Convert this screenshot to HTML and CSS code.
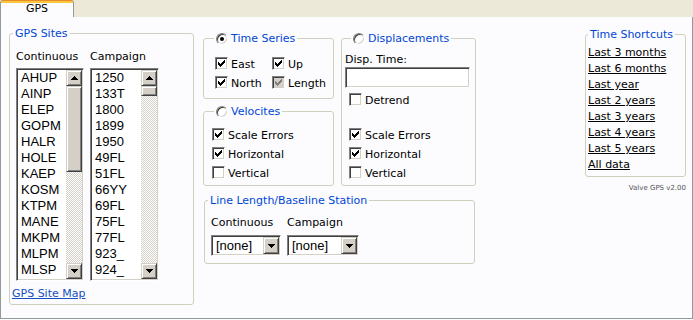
FILE: index.html
```html
<!DOCTYPE html>
<html>
<head>
<meta charset="utf-8">
<title>Valve GPS</title>
<link rel="stylesheet" href="styles.css">
</head>
<body>
<svg class="defs" width="0" height="0">
  <defs>
    <symbol id="ck" viewBox="0 0 13 13">
      <path d="M9 3h1v1h-1zM8 4h2v1h-2zM3 5h1v1h-1zM7 5h3v1h-3zM3 6h2v1h-2zM6 6h3v1h-3zM3 7h5v1h-5zM4 8h3v1h-3zM5 9h1v1h-1z"/>
    </symbol>
    <symbol id="up" viewBox="0 0 7 4">
      <path d="M3 0h1v1h-1zM2 1h3v1h-3zM1 2h5v1h-5zM0 3h7v1h-7z"/>
    </symbol>
    <symbol id="dn" viewBox="0 0 7 4">
      <path d="M0 0h7v1h-7zM1 1h5v1h-5zM2 2h3v1h-3zM3 3h1v1h-1z"/>
    </symbol>
  </defs>
</svg>

<div class="tabs"><div class="tab">GPS</div></div>

<div class="panel">
  <fieldset class="group sites">
    <legend>GPS Sites</legend>
    <div class="lists">
      <div class="listcol c1">
        <div class="lbl">Continuous</div>
        <div class="listbox">
          <ul class="items">
            <li>AHUP</li><li>AINP</li><li>ELEP</li><li>GOPM</li><li>HALR</li><li>HOLE</li><li>KAEP</li><li>KOSM</li><li>KTPM</li><li>MANE</li><li>MKPM</li><li>MLPM</li><li>MLSP</li>
          </ul>
          <div class="vscroll">
            <span class="sbtn"><svg class="arr"><use href="#up"/></svg></span>
            <span class="thumb big"></span>
            <span class="track"></span>
            <span class="sbtn"><svg class="arr"><use href="#dn"/></svg></span>
          </div>
        </div>
      </div>
      <div class="listcol c2">
        <div class="lbl">Campaign</div>
        <div class="listbox">
          <ul class="items">
            <li>1250</li><li>133T</li><li>1800</li><li>1899</li><li>1950</li><li>49FL</li><li>51FL</li><li>66YY</li><li>69FL</li><li>75FL</li><li>77FL</li><li>923_</li><li>924_</li>
          </ul>
          <div class="vscroll">
            <span class="sbtn"><svg class="arr"><use href="#up"/></svg></span>
            <span class="thumb small"></span>
            <span class="track"></span>
            <span class="sbtn"><svg class="arr"><use href="#dn"/></svg></span>
          </div>
        </div>
      </div>
    </div>
    <a class="maplink" href="#">GPS Site Map</a>
  </fieldset>

  <div class="middle">
    <div class="upper">
      <div class="leftstack">
        <fieldset class="group ts">
          <legend class="rleg"><span class="radio on"></span><span>Time Series</span></legend>
          <div class="tsgrid">
            <div class="cb"><span class="chk"><svg class="ckm"><use href="#ck"/></svg></span><span class="t">East</span></div>
            <div class="cb"><span class="chk"><svg class="ckm"><use href="#ck"/></svg></span><span class="t">Up</span></div>
            <div class="cb"><span class="chk"><svg class="ckm"><use href="#ck"/></svg></span><span class="t">North</span></div>
            <div class="cb"><span class="chk dis"><svg class="ckm"><use href="#ck"/></svg></span><span class="t">Length</span></div>
          </div>
        </fieldset>
        <fieldset class="group vel">
          <legend class="rleg"><span class="radio"></span><span>Velocites</span></legend>
          <div class="cblist vcb">
            <div class="cb"><span class="chk"><svg class="ckm"><use href="#ck"/></svg></span><span class="t">Scale Errors</span></div>
            <div class="cb"><span class="chk"><svg class="ckm"><use href="#ck"/></svg></span><span class="t">Horizontal</span></div>
            <div class="cb"><span class="chk"></span><span class="t">Vertical</span></div>
          </div>
        </fieldset>
      </div>
      <fieldset class="group disp">
        <legend class="dleg"><span class="radio"></span><span>Displacements</span></legend>
        <div class="lbl dlbl">Disp. Time:</div>
        <div class="textbox"></div>
        <div class="cblist dcb1">
          <div class="cb"><span class="chk"></span><span class="t">Detrend</span></div>
        </div>
        <div class="cblist dcb2">
          <div class="cb"><span class="chk"><svg class="ckm"><use href="#ck"/></svg></span><span class="t">Scale Errors</span></div>
          <div class="cb"><span class="chk"><svg class="ckm"><use href="#ck"/></svg></span><span class="t">Horizontal</span></div>
          <div class="cb"><span class="chk"></span><span class="t">Vertical</span></div>
        </div>
      </fieldset>
    </div>
    <fieldset class="group line">
      <legend>Line Length/Baseline Station</legend>
      <div class="selrow">
        <div class="selcol s1">
          <div class="lbl">Continuous</div>
          <div class="select"><span class="val">[none]</span><span class="sbtn dd"><svg class="arr"><use href="#dn"/></svg></span></div>
        </div>
        <div class="selcol s2">
          <div class="lbl">Campaign</div>
          <div class="select"><span class="val">[none]</span><span class="sbtn dd"><svg class="arr"><use href="#dn"/></svg></span></div>
        </div>
      </div>
    </fieldset>
  </div>

  <div class="right">
    <fieldset class="group shortcuts">
      <legend>Time Shortcuts</legend>
      <div class="links">
        <a href="#">Last 3 months</a>
        <a href="#">Last 6 months</a>
        <a href="#">Last year</a>
        <a href="#">Last 2 years</a>
        <a href="#">Last 3 years</a>
        <a href="#">Last 4 years</a>
        <a href="#">Last 5 years</a>
        <a href="#">All data</a>
      </div>
    </fieldset>
    <div class="version">Valve GPS v2.00</div>
  </div>
</div>
</body>
</html>
```

FILE: styles.css
```css
* { box-sizing: border-box; }
html, body { margin: 0; padding: 0; }
body {
  width: 693px;
  height: 320px;
  overflow: hidden;
  background: #fcfcfe;
  font-family: "DejaVu Sans", sans-serif;
  font-size: 11px;
  color: #000;
}
.defs { position: absolute; width: 0; height: 0; overflow: hidden; }

/* tab strip */
.tabs { height: 17px; background: #ece9d8; display: flex; }
.tab {
  width: 74px;
  height: 17px;
  padding-top: 3px;
  border-left: 1px solid #919b9c;
  border-right: 1px solid #919b9c;
  border-radius: 3px 3px 0 0;
  background: linear-gradient(#e68b2c 0 1px, #ffc73c 1px 3px, #fcfcfe 3px);
  text-align: center;
  line-height: 12px;
}

/* panel */
.panel {
  width: 693px;
  height: 302px;
  border: 1px solid #919b9c;
  border-top: 0;
  padding: 10px 6px 0 8px;
  display: flex;
  align-items: flex-start;
  background: #fcfcfe;
}

/* group boxes */
.group {
  margin: 0;
  padding: 0 6px;
  border: 1px solid #d0d0bf;
  border-radius: 3px;
  min-width: 0;
}
.group > legend {
  padding: 0 2px;
  margin-left: -3px;
  height: 13px;
  line-height: 13px;
  color: #0046d5;
}
.group > legend.rleg,
.group > legend.dleg {
  display: flex;
  align-items: center;
  margin-left: 4px;
}
.group > legend.dleg { margin-left: 6px; }

.lbl { line-height: 14px; }

/* GPS sites */
.sites { width: 185px; height: 278px; margin-right: 9px; }
.lists { display: flex; gap: 6px; }
.lists .lbl { margin-top: 10px; }
.c1 { width: 68px; }
.c2 { width: 69px; }
.listbox {
  margin-top: 4px;
  height: 213px;
  padding: 1px;
  display: flex;
  background: #fff;
  border: 1px solid;
  border-color: #808080 #fff #fff #808080;
  box-shadow: inset 1px 1px #404040, inset -1px -1px #d4d0c8;
}
.items {
  flex: 1;
  margin: 0;
  padding: 0 0 0 3px;
  list-style: none;
  overflow: hidden;
  font-family: "Liberation Sans", Arial, sans-serif;
  font-size: 13px;
  line-height: 16px;
}
.vscroll { width: 16px; display: flex; flex-direction: column; }
.sbtn, .thumb {
  display: flex;
  align-items: center;
  justify-content: center;
  flex: none;
  background: #d4d0c8;
  border: 1px solid;
  border-color: #d4d0c8 #404040 #404040 #d4d0c8;
  box-shadow: inset 1px 1px #fff, inset -1px -1px #808080;
}
.vscroll .sbtn { height: 16px; }
.thumb.big { height: 86px; }
.thumb.small { height: 10px; }
.track {
  flex: 1;
  background: repeating-conic-gradient(#d4d0c8 0 25%, #fff 0 50%) 0 0 / 2px 2px;
}
.arr { width: 7px; height: 4px; fill: #000; }
.maplink {
  display: inline-block;
  margin: 6px 0 0 -4px;
  line-height: 14px;
  color: #1550c0;
  text-decoration: underline;
}

/* middle */
.middle { width: 273px; margin-top: 5px; display: flex; flex-direction: column; }
.upper { display: flex; gap: 7px; align-items: flex-start; }
.leftstack { width: 131px; display: flex; flex-direction: column; }
.ts { height: 67px; }
.vel { height: 81px; margin-top: 6px; }
.disp { width: 135px; height: 154px; padding-left: 3px; }

.radio {
  position: relative;
  width: 12px;
  height: 12px;
  margin-right: 3px;
  flex: none;
  border-radius: 50%;
  background: #fff;
  border: 1px solid;
  border-color: #808080 #fff #fff #808080;
  box-shadow: inset 1px 1px #404040, inset -1px -1px #d4d0c8;
}
.radio.on::after {
  content: "";
  position: absolute;
  left: 3px;
  top: 3px;
  width: 4px;
  height: 4px;
  border-radius: 50%;
  background: #000;
}

.cb { display: flex; align-items: center; height: 19px; white-space: nowrap; }
.chk {
  position: relative;
  width: 13px;
  height: 13px;
  margin-right: 3px;
  flex: none;
  background: #fff;
  border: 1px solid;
  border-color: #808080 #fff #fff #808080;
  box-shadow: inset 1px 1px #404040, inset -1px -1px #d4d0c8;
}
.chk.dis { background: #d4d0c8; }
.ckm { position: absolute; left: -1px; top: -1px; width: 13px; height: 13px; fill: #000; }
.chk.dis .ckm { fill: #808080; }
.t { padding-top: 2px; line-height: 13px; }

.tsgrid {
  margin-top: 9px;
  padding-left: 5px;
  display: grid;
  grid-template-columns: 57px auto;
}
.vcb { margin-top: 7px; padding-left: 2px; }

.dlbl { margin-top: 8px; }
.textbox {
  width: 125px;
  height: 21px;
  background: #fff;
  border: 1px solid;
  border-color: #808080 #fff #fff #808080;
  box-shadow: inset 1px 1px #404040, inset -1px -1px #d4d0c8;
}
.dcb1 { margin-top: 2px; padding-left: 4px; }
.dcb2 { margin-top: 16px; padding-left: 4px; }

/* line length */
.line { width: 271px; height: 70px; margin: 8px 0 0 1px; }
.selrow { display: flex; gap: 6px; }
.selrow .lbl { margin-top: 9px; }
.s1 { width: 70px; }
.s2 { width: 72px; }
.select {
  margin-top: 5px;
  height: 21px;
  padding: 1px;
  display: flex;
  background: #fff;
  border: 1px solid;
  border-color: #808080 #fff #fff #808080;
  box-shadow: inset 1px 1px #404040, inset -1px -1px #d4d0c8;
}
.val {
  flex: 1;
  padding-left: 3px;
  font-family: "Liberation Sans", Arial, sans-serif;
  font-size: 13px;
  line-height: 17px;
}
.sbtn.dd { width: 16px; height: 17px; }

/* right column */
.right { margin-left: auto; margin-top: 1px; width: 101px; display: flex; flex-direction: column; }
.shortcuts { height: 149px; padding: 0 2px; }
.shortcuts > legend { margin-left: 0; }
.links { margin-top: 4px; display: flex; flex-direction: column; align-items: flex-start; }
.links a { color: #000; text-decoration: underline; line-height: 16px; }
.version {
  margin-top: 7px;
  text-align: right;
  font-size: 7px;
  line-height: 9px;
  color: #555;
}
```
